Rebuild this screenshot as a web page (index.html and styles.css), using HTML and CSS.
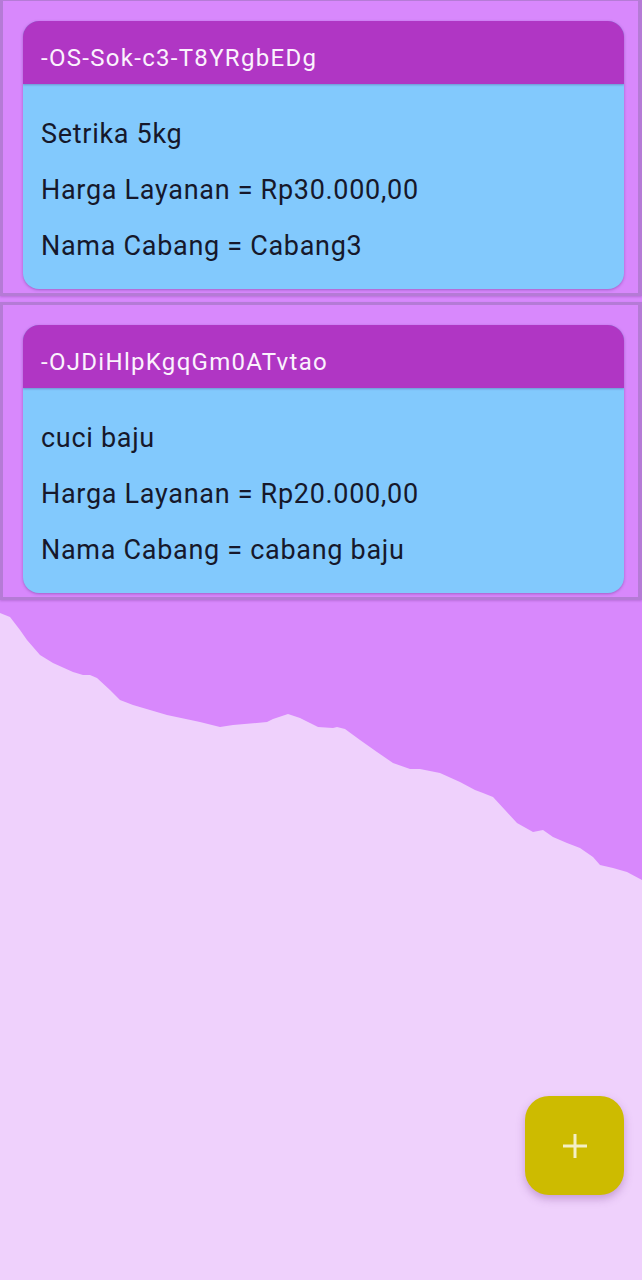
FILE: index.html
```html
<!DOCTYPE html>
<html lang="id">
<head>
<meta charset="utf-8">
<title>Layanan</title>
<link rel="stylesheet" href="styles.css">
</head>
<body>
<div class="backdrop">
  <svg class="wave" width="642" height="1280" viewBox="0 0 642 1280" preserveAspectRatio="none">
    <path fill="#efd1fc" d="M0 613 L10 617 L20 630 L27 640 L40 655 L53 663 L73 672 L83 675 L90 675 L97 678 L110 690 L120 700 L133 705 L167 715 L200 722 L220 727 L233 725 L267 722 L273 719 L288 714 L300 718 L310 723 L318 727 L333 728 L337 727 L345 729 L360 740 L377 752 L393 763 L410 769 L420 769 L440 773 L460 782 L475 790 L483 793 L493 797 L505 810 L517 823 L533 832 L543 830 L553 837 L567 843 L580 848 L593 857 L600 865 L613 868 L627 872 L642 880 L642 1280 L0 1280 Z"/>
  </svg>
</div>
<main class="list">
  <section class="item">
    <article class="card">
      <header class="card-head">-OS-Sok-c3-T8YRgbEDg</header>
      <div class="card-body">
        <p class="line">Setrika 5kg</p>
        <p class="line">Harga Layanan = Rp30.000,00</p>
        <p class="line">Nama Cabang = Cabang3</p>
      </div>
    </article>
  </section>
  <section class="item">
    <article class="card">
      <header class="card-head">-OJDiHlpKgqGm0ATvtao</header>
      <div class="card-body">
        <p class="line">cuci baju</p>
        <p class="line">Harga Layanan = Rp20.000,00</p>
        <p class="line">Nama Cabang = cabang baju</p>
      </div>
    </article>
  </section>
</main>
<button class="fab" aria-label="Tambah">
  <svg width="28" height="28" viewBox="0 0 28 28"><path d="M14 2 V26 M2 14 H26" stroke="#f4efc6" stroke-width="3" fill="none"/></svg>
</button>
</body>
</html>
```
FILE: styles.css
```css
html, body {
  margin: 0;
  padding: 0;
}
body {
  width: 642px;
  height: 1280px;
  background: #d888fc;
  font-family: Roboto, "Noto Sans", sans-serif;
  position: relative;
  overflow: hidden;
}
.backdrop {
  position: absolute;
  inset: 0;
  z-index: 0;
}
.wave {
  display: block;
}
.list {
  position: relative;
  z-index: 1;
  display: flex;
  flex-direction: column;
  gap: 6px;
  margin-top: -2px;
}
.item {
  border: 3px solid #b57bd6;
  border-right-width: 4px;
  padding: 20px 14px 4px 20px;
  box-shadow: 0 1px 2px rgba(90, 30, 120, 0.25);
}
.card {
  border-radius: 16px;
  overflow: hidden;
  background: #82c9fd;
  box-shadow: 0 1px 3px rgba(60, 20, 100, 0.35);
}
.card-head {
  height: 63px;
  box-sizing: border-box;
  display: flex;
  align-items: center;
  padding: 10px 0 0 18px;
  background: #b036c4;
  color: #fbf2fd;
  font-size: 24px;
  letter-spacing: 1.3px;
  box-shadow: 0 1px 2px rgba(60, 20, 100, 0.3);
  position: relative;
}
.card-body {
  padding: 22px 18px 15px;
  color: #16182b;
  font-size: 27px;
  letter-spacing: 0.7px;
}
.line {
  margin: 0;
  line-height: 56px;
}
.fab {
  position: absolute;
  left: 525px;
  top: 1096px;
  width: 99px;
  height: 99px;
  border: none;
  border-radius: 24px;
  background: #cdbb00;
  box-shadow: 0 4px 8px rgba(120, 60, 140, 0.35);
  display: flex;
  align-items: center;
  justify-content: center;
  padding: 0;
  z-index: 2;
}
```
